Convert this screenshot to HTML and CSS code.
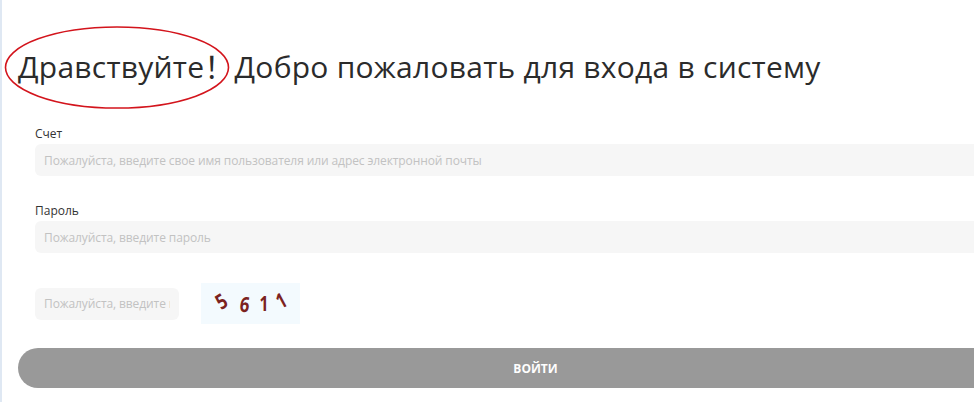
FILE: index.html
```html
<!DOCTYPE html>
<html lang="ru">
<head>
<meta charset="utf-8">
<title>Вход</title>
<link rel="stylesheet" href="styles.css">
</head>
<body>
<main class="page">
  <h1 class="title">Дравствуйте！Добро пожаловать для входа в систему
    <svg class="ring" viewBox="0 0 226 84" aria-hidden="true"><ellipse cx="113" cy="41.5" rx="111.5" ry="40.5"/></svg>
  </h1>
  <form class="form">
    <div class="field">
      <label class="label">Счет</label>
      <input class="input" placeholder="Пожалуйста, введите свое имя пользователя или адрес электронной почты">
    </div>
    <div class="field">
      <label class="label">Пароль</label>
      <input class="input" placeholder="Пожалуйста, введите пароль">
    </div>
    <div class="captcha-row">
      <input class="input short" placeholder="Пожалуйста, введите код">
      <div class="captcha"><span class="d d1">5</span><span class="d d2">6</span><span class="d d3">1</span><span class="d d4">1</span></div>
    </div>
  </form>
  <button class="submit" type="button">ВОЙТИ</button>
</main>
</body>
</html>
```
FILE: styles.css
```css
* { box-sizing: border-box; }
html, body { margin: 0; height: 100%; overflow: hidden; background: #fff; }
body { font-family: "Open Sans", "Noto Sans", sans-serif; }
.page { width: 974px; height: 402px; border-left: 2px solid #dfe8f3; padding: 45px 0 0 16px; overflow: hidden; }
.title { position: relative; margin: 0; width: 956px; height: 44px; font-family: "Open Sans", "Noto Sans CJK SC", sans-serif; font-size: 30px; line-height: 44px; font-weight: 400; color: #2b2b2b; white-space: nowrap; letter-spacing: 0.25px; }
.ring { position: absolute; left: -14px; top: -19px; width: 226px; height: 84px; }
.ring ellipse { fill: none; stroke: #d3141c; stroke-width: 1.6; }
.form { padding: 0 0 0 17px; margin-top: 36px; }
.field { display: flex; flex-direction: column; margin-bottom: 26px; }
.label { font-size: 12px; line-height: 17px; color: #333; margin-bottom: 2px; }
.input { width: 950px; height: 32px; border: 0; border-radius: 6px; background: #f6f6f6; padding: 0 9px; font: 12px "Open Sans", sans-serif; letter-spacing: -0.1px; outline: 0; }
.input::placeholder { color: #c2c2c2; opacity: 1; }
.captcha-row { display: flex; align-items: center; gap: 22px; margin-top: 30px; }
.input.short { width: 144px; height: 32px; }
.captcha { width: 99px; height: 41px; background: #f3fafe; display: flex; align-items: center; padding: 0 0 0 12px; font: 700 21px "Open Sans", sans-serif; color: #7b2220; }
.d { display: inline-block; width: 16px; text-align: center; }
.d1 { transform: translateY(-3px) rotate(-32deg) scale(.8, 1); }
.d2 { margin-left: 8px; transform: translateY(0) rotate(8deg) scale(.8, 1); }
.d3 { margin-left: 3px; transform: translateY(-1px) scale(.75, 1); }
.d4 { margin-left: 1px; transform: translateY(-4px) rotate(-28deg) scale(.75, 1); }
.submit { display: block; width: 956px; height: 40px; margin-top: 24px; border: 0; border-radius: 20px 0 0 20px; background: #999; color: #fff; font: 700 12px "Open Sans", sans-serif; padding: 0 0 0 79px; }
```
